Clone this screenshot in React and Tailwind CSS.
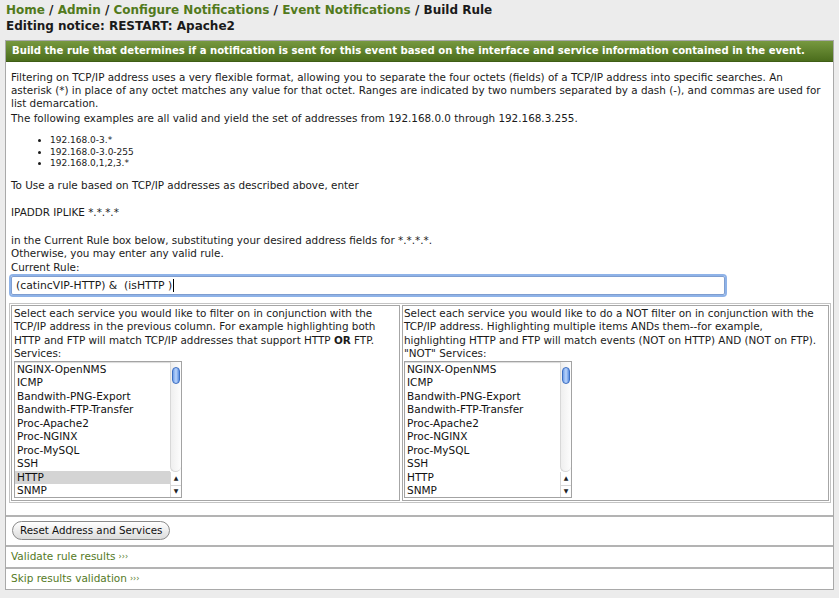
import React from 'react'

const services = ['NGINX-OpenNMS','ICMP','Bandwith-PNG-Export','Bandwith-FTP-Transfer','Proc-Apache2','Proc-NGINX','Proc-MySQL','SSH','HTTP','SNMP'];

// ===================== LISTBOX =====================
const ListBox = ({ selected }) => (
  <div className="flex w-[168px] h-[137px] border border-[#a3a3a3] bg-white shadow-[inset_0_1px_1px_rgba(0,0,0,0.15)]">
    <div className="flex-1 pt-[1px]">
      {services.map(s=>(
        <div key={s} className={`h-[13.5px] leading-[13.5px] pl-[2px] text-[10.5px] text-[#111] ${s===selected?'bg-[#d4d4d4]':''}`}>{s}</div>
      ))}
    </div>
    <div className="w-[11px] flex flex-col">
      <div className="flex-1 border-l border-[#d8d8d8] rounded-b-[6px] border-b bg-gradient-to-r from-[#efefef] to-[#fdfdfd] pt-[5px]">
        <div className="mx-auto w-[8px] h-[17px] rounded-full border border-[#3d6fc2] bg-gradient-to-r from-[#6f9ee8] via-[#bcd5fb] to-[#5b8ee0]"></div>
      </div>
      <div className="h-[13px] border-l border-[#d8d8d8] flex items-center justify-center text-[6px] text-[#222]">▲</div>
      <div className="h-[12px] border-l border-t border-[#d8d8d8] flex items-center justify-center text-[6px] text-[#222]">▼</div>
    </div>
  </div>
);

const App = () => {
  return (
    <div className="min-h-[598px] bg-[#ececec] font-['DejaVu_Sans',sans-serif] text-[#1a1a1a]">
      <div className="px-[6px] pt-[2px] text-[12px] font-bold leading-[16px]">
        <div>
          <span className="text-[#527a1c]">Home</span> / <span className="text-[#527a1c]">Admin</span> / <span className="text-[#527a1c]">Configure Notifications</span> / <span className="text-[#527a1c]">Event Notifications</span> / <span>Build Rule</span>
        </div>
        <div>Editing notice: RESTART: Apache2</div>
      </div>

      <div className="mx-[5px] mt-[6px] border border-[#a9a9a9] bg-white">
        <div className="h-[21px] flex items-center px-[6px] bg-gradient-to-b from-[#77993f] to-[#4b6d1c] border-b border-[#3f5e16] text-white font-bold text-[10.1px] whitespace-nowrap">
          Build the rule that determines if a notification is sent for this event based on the interface and service information contained in the event.
        </div>

        <div className="px-[5px] pt-[9px] text-[10.4px] leading-[13px]">
          <p className="whitespace-nowrap">Filtering on TCP/IP address uses a very flexible format, allowing you to separate the four octets (fields) of a TCP/IP address into specific searches. An<br/>asterisk (*) in place of any octet matches any value for that octet. Ranges are indicated by two numbers separated by a dash (-), and commas are used for<br/>list demarcation.</p>
          <p className="mt-[2px]">The following examples are all valid and yield the set of addresses from 192.168.0.0 through 192.168.3.255.</p>
          <ul className="list-disc pl-[39px] mt-[10px] text-[9px] leading-[11.5px]">
            <li>192.168.0-3.*</li>
            <li>192.168.0-3.0-255</li>
            <li>192.168.0,1,2,3.*</li>
          </ul>
          <p className="mt-[9px]">To Use a rule based on TCP/IP addresses as described above, enter</p>
          <p className="mt-[14px]">IPADDR IPLIKE *.*.*.*</p>
          <p className="mt-[15px]">in the Current Rule box below, substituting your desired address fields for *.*.*.*.<br/>Otherwise, you may enter any valid rule.</p>
          <p className="mt-[1px]">Current Rule:</p>
          <div className="mt-[2px] w-[714px] h-[19px] border border-[#7f9ed0] rounded-[2px] shadow-[0_0_0_2px_#8fb3e8] flex items-center px-[4px] text-[10.8px]">
            (catincVIP-HTTP) &amp;&nbsp; (isHTTP )<span className="inline-block w-[1px] h-[13px] bg-black ml-[1px]"></span>
          </div>

          <div className="mt-[8px] ml-[-2px] mr-[-3px] border border-[#c4c4c4] p-[1px] flex gap-[2px]">
            <div className="w-[389px] border border-[#a6a6a6] px-[2px] pt-[1px] pb-[2px] leading-[13.5px] text-[10.4px]">
              <p>Select each service you would like to filter on in conjunction with the TCP/IP address in the previous column. For example highlighting both HTTP and FTP will match TCP/IP addresses that support HTTP <b>OR</b> FTP.</p>
              <p>Services:</p>
              <ListBox selected="HTTP" />
            </div>
            <div className="flex-1 border border-[#a6a6a6] px-[1px] pt-[1px] pb-[2px] leading-[13.5px] text-[10.4px]">
              <p>Select each service you would like to do a NOT filter on in conjunction with the TCP/IP address. Highlighting multiple items ANDs them--for example, highlighting HTTP and FTP will match events (NOT on HTTP) AND (NOT on FTP).</p>
              <p>"NOT" Services:</p>
              <ListBox />
            </div>
          </div>
          <div className="h-[12px]"></div>
        </div>

        <div className="border-t-2 border-[#b3b3b3] h-[30px] flex items-center px-[6px]">
          <button className="h-[19px] px-[7px] rounded-full border border-[#8a8a8a] bg-gradient-to-b from-[#ffffff] to-[#dcdcdc] text-[10.3px] text-[#111] leading-none">Reset Address and Services</button>
        </div>
        <div className="border-t-2 border-[#b3b3b3] h-[22px] flex items-center px-[5px] text-[10.5px] text-[#557a1f]">Validate rule results <span className="ml-[3px] text-[8px]">›››</span></div>
        <div className="border-t-2 border-[#b3b3b3] h-[22px] flex items-center px-[5px] text-[10.5px] text-[#557a1f]">Skip results validation <span className="ml-[3px] text-[8px]">›››</span></div>
      </div>
    </div>
  );
};

export default App;
